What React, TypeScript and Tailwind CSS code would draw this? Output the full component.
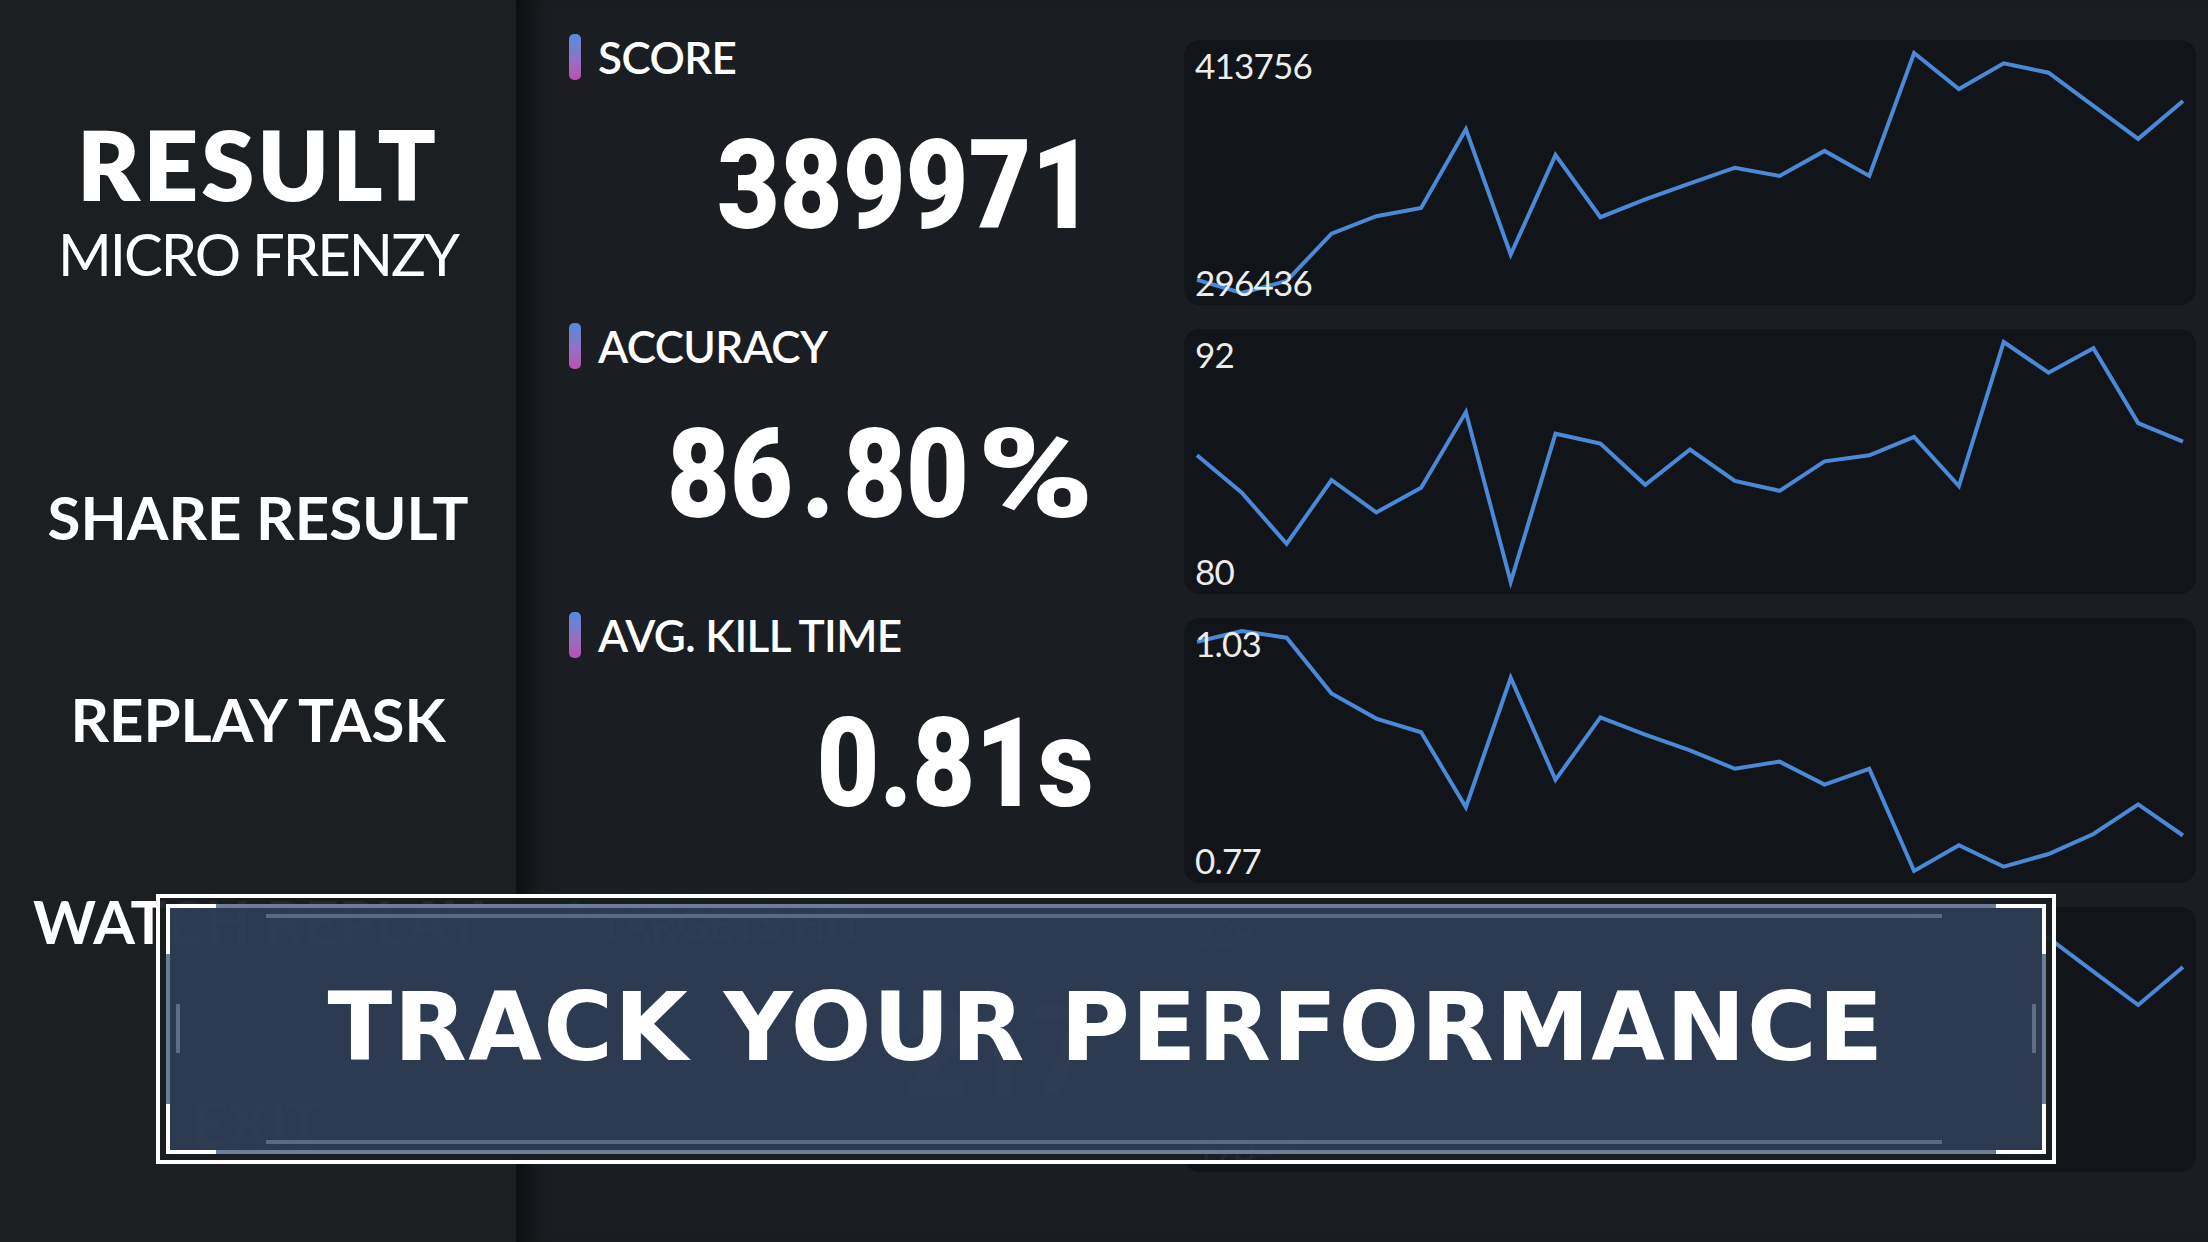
const score = [0.055, 0, 0.05, 0.247, 0.32, 0.354, 0.682, 0.16, 0.575, 0.316, 0.39, 0.457, 0.522, 0.488, 0.592, 0.488, 1, 0.85, 0.957, 0.918, 0.78, 0.642, 0.8];
const accuracy = [0.528, 0.372, 0.159, 0.425, 0.29, 0.393, 0.708, 0, 0.618, 0.577, 0.405, 0.552, 0.421, 0.38, 0.503, 0.528, 0.605, 0.4, 1, 0.872, 0.974, 0.662, 0.585];
const killTime = [0.955, 1, 0.972, 0.74, 0.635, 0.578, 0.266, 0.805, 0.38, 0.64, 0.568, 0.503, 0.426, 0.456, 0.36, 0.426, 0, 0.107, 0.018, 0.071, 0.154, 0.278, 0.148];
const targets = [0.06, 0, 0.045, 0.25, 0.33, 0.35, 0.67, 0.17, 0.57, 0.32, 0.39, 0.46, 0.52, 0.49, 0.6, 0.49, 1, 0.846, 0.958, 0.925, 0.785, 0.646, 0.804];

const stats = [
  { label: "SCORE", value: "389971", max: "413756", min: "296436", data: score },
  { label: "ACCURACY", value: "86.80%", max: "92", min: "80", data: accuracy },
  { label: "AVG. KILL TIME", value: "0.81s", max: "1.03", min: "0.77", data: killTime },
  { label: "TARGETS HIT", value: "217", max: "229", min: "170", data: targets },
];

const menu = ["SHARE RESULT", "REPLAY TASK", "WATCH REPLAY", "EXIT"];

function Spark({ data }: { data: number[] }) {
  const step = 986 / (data.length - 1);
  const pts = data.map((t, i) => `${(13 + i * step).toFixed(1)},${(13 + (1 - t) * 240).toFixed(1)}`).join(" ");
  return (
    <svg className="absolute inset-0" width={1012} height={265} viewBox="0 0 1012 265">
      <polyline points={pts} fill="none" stroke="#4a89d8" strokeWidth={4} strokeLinejoin="miter" />
    </svg>
  );
}

function Chart({ max, min, data }: { max: string; min: string; data: number[] }) {
  return (
    <div className="relative h-[265px] w-[1012px] overflow-hidden rounded-[16px] bg-[#111418]">
      <Spark data={data} />
      <div className="relative flex h-full flex-col items-start justify-between pl-[11px] pt-[8px] pb-[5px] text-[35px] leading-none tracking-[-0.8px] text-[#ececec]">
        <span>{max}</span>
        <span>{min}</span>
      </div>
    </div>
  );
}

function BigValue({ value }: { value: string }) {
  const pct = value.endsWith("%");
  return (
    <span
      className="origin-right scale-x-[0.875] text-[124px] font-black leading-none text-white"
      style={{ fontFamily: 'Roboto, "Liberation Sans", sans-serif' }}
    >
      {pct ? (
        <>
          {value.slice(0, value.indexOf("."))}
          <span className="mx-[10px]">.</span>
          {value.slice(value.indexOf(".") + 1, -1)}
          <span className="ml-[51px] inline-block origin-right scale-x-[1.45]">%</span>
        </>
      ) : (
        value
      )}
    </span>
  );
}

function Stat({ label, value }: { label: string; value: string }) {
  return (
    <div className="flex h-[289px] flex-col">
      <div className="flex h-[46px] items-center gap-[17px]">
        <span className="h-[46px] w-[12px] rounded-[5px] bg-linear-to-b from-[#4b8ddc] to-[#b551b0]" />
        <span className="text-[44px] font-semibold leading-none tracking-[-0.6px] text-white">{label}</span>
      </div>
      <div className="mt-[44px] flex justify-end">
        <BigValue value={value} />
      </div>
    </div>
  );
}

function Banner() {
  return (
    <div className="absolute left-[156px] top-[894px] z-10 h-[270px] w-[1900px] border-4 border-white bg-[#1a1d21]/95 p-[6px]">
      <div className="relative flex h-full w-full items-center justify-center border-4 border-[#6b7e98] bg-[#30415a]/85">
        <span className="absolute -left-[4px] -top-[4px] h-[50px] w-[50px] border-l-4 border-t-4 border-white" />
        <span className="absolute -right-[4px] -top-[4px] h-[50px] w-[50px] border-r-4 border-t-4 border-white" />
        <span className="absolute -bottom-[4px] -left-[4px] h-[50px] w-[50px] border-b-4 border-l-4 border-white" />
        <span className="absolute -bottom-[4px] -right-[4px] h-[50px] w-[50px] border-b-4 border-r-4 border-white" />
        <span className="absolute left-[96px] right-[100px] top-[6px] h-[4px] bg-[#5a6a80]" />
        <span className="absolute bottom-[6px] left-[96px] right-[100px] h-[4px] bg-[#5a6a80]" />
        <span className="absolute left-[6px] top-[96px] h-[49px] w-[4px] bg-[#5d6d82]" />
        <span className="absolute right-[6px] top-[96px] h-[49px] w-[4px] bg-[#5d6d82]" />
        <span
          className="mt-[-4px] text-[95px] font-bold leading-none tracking-[1.4px] text-white"
          style={{ fontFamily: '"DejaVu Sans", "Open Sans", sans-serif' }}
        >
          TRACK YOUR PERFORMANCE
        </span>
      </div>
    </div>
  );
}

export default function App() {
  return (
    <div
      className="relative flex h-[1242px] w-[2208px] overflow-hidden bg-[#1a1d21]"
      style={{ fontFamily: 'Lato, "Noto Sans", sans-serif' }}
    >
      <aside className="flex w-[516px] shrink-0 flex-col items-center bg-[#1b1f22] pt-[116px] text-white">
        <h1 className="text-[96px] font-extrabold leading-none tracking-[3px]">RESULT</h1>
        <div className="mt-[13px] text-[58px] font-normal leading-none tracking-[-2px]">MICRO FRENZY</div>
        <nav className="mt-[204px] flex flex-col items-center gap-[142px]">
          {menu.map((m) => (
            <button key={m} className="text-[60px] font-bold leading-none text-white">
              {m}
            </button>
          ))}
        </nav>
      </aside>

      <main className="flex flex-1 shadow-[inset_26px_0_22px_-14px_rgba(0,0,0,0.55)]">
        <section className="ml-[53px] flex w-[525px] flex-col pt-[34px]">
          {stats.map((s) => (
            <Stat key={s.label} label={s.label} value={s.value} />
          ))}
        </section>
        <section className="ml-[90px] flex flex-col gap-[24px] pt-[40px]">
          {stats.map((s) => (
            <Chart key={s.label} max={s.max} min={s.min} data={s.data} />
          ))}
        </section>
      </main>

      <Banner />
    </div>
  );
}
